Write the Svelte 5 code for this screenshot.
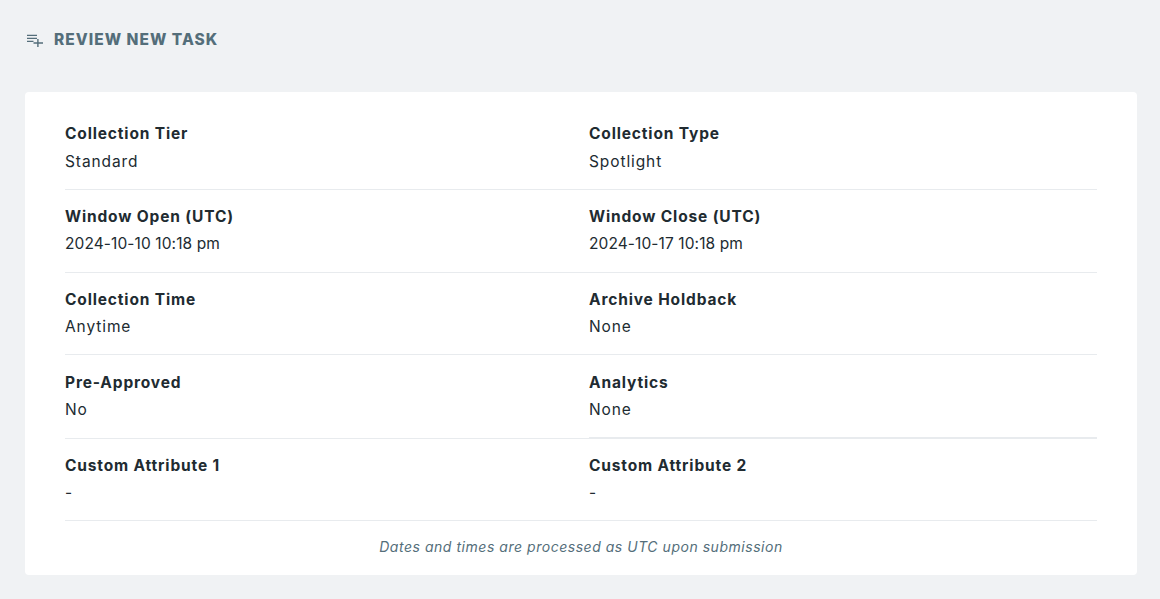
<script>
	const rows = [
		[['Collection Tier', 'Standard'], ['Collection Type', 'Spotlight']],
		[['Window Open (UTC)', '2024-10-10 10:18 pm', true], ['Window Close (UTC)', '2024-10-17 10:18 pm', true]],
		[['Collection Time', 'Anytime'], ['Archive Holdback', 'None']],
		[['Pre-Approved', 'No'], ['Analytics', 'None']],
		[['Custom Attribute 1', '-'], ['Custom Attribute 2', '-']]
	];
</script>

<div class="page">
	<header class="title">
		<svg class="icon" viewBox="0 0 16 14" width="16" height="14" aria-hidden="true">
			<path d="M0 1.7h10v1.4H0zM0 4.7h10v1.4H0zM0 7.7h6.5v1.4H0zM10.2 6h1.4v3.3H16v1.4h-4.4V14h-1.4v-3.3H6.5V9.3h3.7z" fill="#546e7a" />
		</svg>
		<h2>REVIEW NEW TASK</h2>
	</header>

	<section class="card">
		{#each rows as row, i}
			<div class="row" class:fourth={i === 3} class:fifth={i === 4}>
				{#each row as cell}
					<div class="cell">
						<div class="label">{cell[0]}</div>
						<div class="value" class:date={cell[2]}>{cell[1]}</div>
					</div>
				{/each}
			</div>
		{/each}
		<p class="note">Dates and times are processed as UTC upon submission</p>
	</section>
</div>

<style>
	:global(body) {
		background: #f0f2f4;
		font-family: Inter, 'Open Sans', sans-serif;
	}

	.page {
		height: 599px;
		padding: 0 23px 0 25px;
		box-sizing: border-box;
		overflow: hidden;
	}

	.title {
		display: flex;
		align-items: center;
		gap: 11px;
		height: 79px;
		padding-left: 2px;
	}

	.icon {
		overflow: visible;
	}

	h2 {
		margin: 0;
		font-size: 15.5px;
		font-weight: 800;
		color: #546e7a;
		letter-spacing: 1.03px;
	}

	.card {
		margin-top: 13px;
		height: 483px;
		box-sizing: border-box;
		padding: 15px 40px 0;
		background: #fff;
		border-radius: 4px;
	}

	.row {
		display: grid;
		grid-template-columns: 524px 508px;
		height: 82.8px;
		box-sizing: border-box;
		border-bottom: 1px solid #e8ebee;
	}

	.row:first-child .value {
		margin-top: 4px;
	}

	.fourth {
		height: 83.6px;
		border-bottom: none;
	}

	.fourth .cell {
		padding-top: 16px;
		border-bottom: 1px solid #e8ebee;
	}

	.fourth .cell:last-child {
		border-bottom-width: 2px;
	}

	.fifth {
		height: 81.8px;
	}

	.cell {
		padding-top: 15px;
		box-sizing: border-box;
	}

	.label {
		font-size: 15.5px;
		line-height: 24px;
		font-weight: 700;
		letter-spacing: 0.85px;
		color: #212b31;
	}

	.value {
		margin-top: 3px;
		font-size: 15.5px;
		line-height: 24px;
		letter-spacing: 0.9px;
		color: #212b31;
	}

	.date {
		letter-spacing: 0.1px;
	}

	.note {
		margin: 17px 0 0;
		text-align: center;
		font-size: 14px;
		line-height: 18px;
		font-style: italic;
		letter-spacing: 0.53px;
		color: #546e7a;
	}
</style>
